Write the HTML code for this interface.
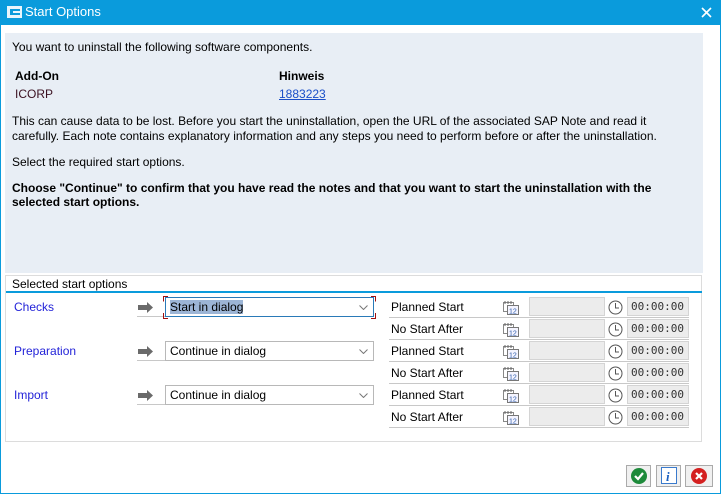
<!DOCTYPE html>
<html><head><meta charset="utf-8"><style>
*{margin:0;padding:0;box-sizing:border-box}
body{width:721px;height:494px;overflow:hidden;background:#fff;font-family:"Liberation Sans",Arial,sans-serif;font-size:12px;color:#000;position:relative}
.win{position:absolute;left:0;top:0;width:721px;height:494px;border:1px solid #0a9bdc;border-top:none}
.title{position:absolute;left:0;top:0;width:721px;height:25px;background:#0a9bdc;color:#fff;font-size:13px}
.title span{position:absolute;left:25px;top:4px}
.panel{position:absolute;left:5px;top:33px;width:698px;height:240px;background:#e8eef5}
.t{position:absolute;white-space:nowrap}
.b{font-weight:bold}
.sec{position:absolute;left:5px;top:275px;width:697px;height:167px;border:1px solid #dcdcdc;background:#fff}
.sech{position:absolute;left:12px;top:277px;font-size:12px}
.secl{position:absolute;left:6px;top:291px;width:696px;height:2px;background:#0a9bdc}
.lbl{position:absolute;color:#2323d8;left:14px}
.arr{position:absolute;left:137px;width:28px;height:20px;border-bottom:1px solid #c8c8c8}
.dd{position:absolute;left:165px;width:209px;height:20px;border:1px solid #b8b8b8;background:#fff;padding:2px 4px}
.dd svg{position:absolute;right:5px;top:7px}
.row{position:absolute;left:389px;width:300px;height:22px;border-bottom:1px solid #c8c8c8}
.row .n{position:absolute;left:2px;top:4px}
.row .f{position:absolute;left:140px;top:1px;width:76px;height:19px;background:#ececec;border:1px solid #d4d4d4}
.row .tm{position:absolute;left:238px;top:1px;width:62px;height:19px;background:#ececec;border:1px solid #d4d4d4;font-family:"DejaVu Sans Mono",monospace;font-size:11px;color:#333;padding:2px 0 0 3px}
.row svg{position:absolute}
.btn{position:absolute;top:465px;width:25px;height:22px;border:1px solid #aaa;background:#f0f0f0}
</style></head><body>
<div class="win"></div>
<div class="title"><svg style="position:absolute;left:7px;top:6px" width="15" height="12"><path d="M0 0h15v12H0z M3 3v6h10V7H6V5h7V3z" fill="#fff" fill-rule="evenodd" fill-opacity="0.9"/></svg><span>Start Options</span>
<svg style="position:absolute;left:701px;top:7px" width="11" height="11"><path d="M1 1L10 10M10 1L1 10" stroke="#fff" stroke-width="1.6"/></svg></div>
<div class="panel"></div>
<div class="t" style="left:12px;top:40px">You want to uninstall the following software components.</div>
<div class="t b" style="left:15px;top:69px">Add-On</div>
<div class="t b" style="left:279px;top:69px">Hinweis</div>
<div class="t" style="left:15px;top:87px;color:#3a1020">ICORP</div>
<div class="t" style="left:279px;top:87px;color:#1a4fc8;text-decoration:underline">1883223</div>
<div class="t" style="left:12px;top:114px">This can cause data to be lost. Before you start the uninstallation, open the URL of the associated SAP Note and read it</div>
<div class="t" style="left:12px;top:129px">carefully. Each note contains explanatory information and any steps you need to perform before or after the uninstallation.</div>
<div class="t" style="left:12px;top:155px">Select the required start options.</div>
<div class="t b" style="left:12px;top:181px">Choose "Continue" to confirm that you have read the notes and that you want to start the uninstallation with the</div>
<div class="t b" style="left:12px;top:195px">selected start options.</div>
<div class="sec"></div>
<div class="sech">Selected start options</div>
<div class="secl"></div>

<div class="lbl" style="top:300px">Checks</div>
<div class="lbl" style="top:344px">Preparation</div>
<div class="lbl" style="top:388px">Import</div>

<div class="arr" style="top:297px"><svg style="position:absolute;left:1px;top:5px" width="16" height="11"><path d="M0 3h9V0l6 5.5-6 5.5V8H0z" fill="#6a6a6a"/></svg></div>
<div class="arr" style="top:341px"><svg style="position:absolute;left:1px;top:5px" width="16" height="11"><path d="M0 3h9V0l6 5.5-6 5.5V8H0z" fill="#6a6a6a"/></svg></div>
<div class="arr" style="top:385px"><svg style="position:absolute;left:1px;top:5px" width="16" height="11"><path d="M0 3h9V0l6 5.5-6 5.5V8H0z" fill="#6a6a6a"/></svg></div>

<div class="dd" style="top:297px;border-color:#2a7ab8"><span style="background:#9cb5d6">Start in dialog</span><svg width="9" height="5"><path d="M.5.5l4 4 4-4" fill="none" stroke="#777"/></svg></div>
<svg style="position:absolute;left:163px;top:296px" width="213" height="23"><path d="M5 .5H.5v5M.5 17v5.5H5M208 .5h4.5v5M212.5 17v5.5H208" fill="none" stroke="#a01010"/></svg>
<div class="dd" style="top:341px">Continue in dialog<svg width="9" height="5"><path d="M.5.5l4 4 4-4" fill="none" stroke="#777"/></svg></div>
<div class="dd" style="top:385px">Continue in dialog<svg width="9" height="5"><path d="M.5.5l4 4 4-4" fill="none" stroke="#777"/></svg></div>

<div id="rows"></div>
<script>
var h='',names=['Planned Start','No Start After'];
for(var i=0;i<6;i++){var y=296+i*22;
h+='<div class="row" style="top:'+y+'px"><span class="n">'+names[i%2]+'</span>'+
'<svg style="left:114px;top:4px" width="16" height="15"><rect x="0.5" y="2.5" width="10" height="9" fill="#fff" stroke="#888"/><rect x="4.5" y="5.5" width="11" height="9" fill="#f4f4ff" stroke="#777"/><text x="6" y="13.5" font-size="7" font-family="Liberation Sans" fill="#2a5aa8">12</text><path d="M2 1v3M5 1v3M8 1v3" stroke="#666"/></svg>'+
'<div class="f"></div>'+
'<svg style="left:219px;top:4px" width="15" height="15"><circle cx="7.5" cy="7.5" r="6.5" fill="#fff" stroke="#555"/><path d="M7.5 3v5H11" fill="none" stroke="#555"/></svg>'+
'<div class="tm">00:00:00</div></div>';}
document.getElementById('rows').innerHTML=h;
</script>
<div class="btn" style="left:626px"><svg style="position:absolute;left:3px;top:1px" width="18" height="18"><circle cx="9" cy="9" r="8" fill="#1d8a3a"/><path d="M5 9l3 3 5-6" fill="none" stroke="#fff" stroke-width="2.2"/></svg></div>
<div class="btn" style="left:656px"><svg style="position:absolute;left:4px;top:1px" width="17" height="18"><rect x="0.5" y="0.5" width="15" height="16" fill="#fff" stroke="#3a7acc"/><text x="5" y="14" font-size="13" font-style="italic" font-weight="bold" font-family="Liberation Serif" fill="#1a5fc0">i</text></svg></div>
<div class="btn" style="left:685px;width:28px"><svg style="position:absolute;left:4px;top:1px" width="18" height="18"><circle cx="9" cy="9" r="8" fill="#d42020"/><path d="M6 6l6 6M12 6l-6 6" stroke="#fff" stroke-width="2.2"/></svg></div>
</body></html>
